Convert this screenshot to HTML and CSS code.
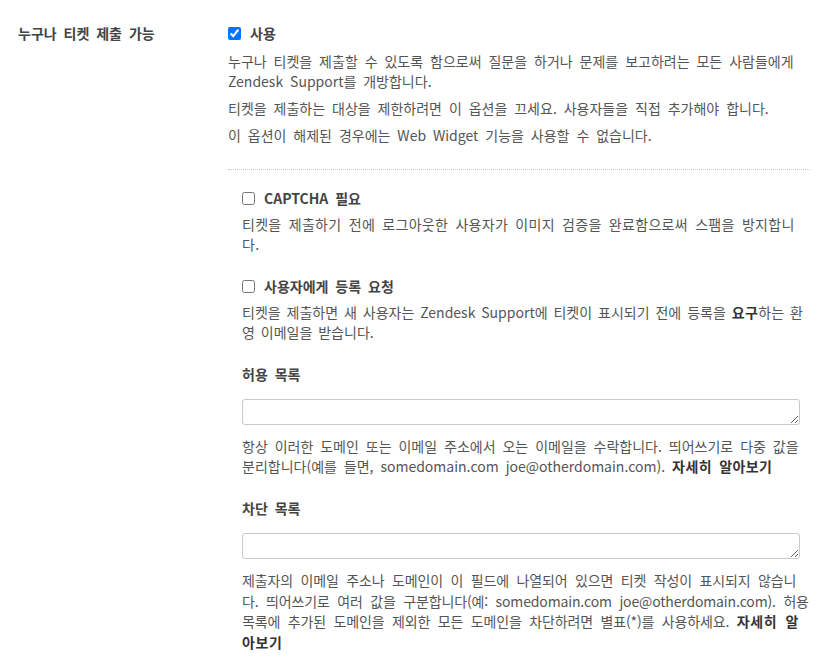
FILE: index.html
```html
<!DOCTYPE html>
<html lang="ko">
<head>
<meta charset="utf-8">
<link rel="stylesheet" href="styles.css">
</head>
<body>
<div class="row">
  <div class="row-label">누구나 티켓 제출 가능</div>
  <div class="row-body">
    <label class="check check-top"><input type="checkbox" class="cb" checked><span>사용</span></label>
    <p class="desc desc-first">누구나 티켓을 제출할 수 있도록 함으로써 질문을 하거나 문제를 보고하려는 모든 사람들에게 Zendesk Support를 개방합니다.</p>
    <p class="desc">티켓을 제출하는 대상을 제한하려면 이 옵션을 끄세요. 사용자들을 직접 추가해야 합니다.</p>
    <p class="desc">이 옵션이 해제된 경우에는 Web Widget 기능을 사용할 수 없습니다.</p>
    <div class="sub">
      <div class="field field-first">
        <label class="check"><input type="checkbox" class="cb"><span>CAPTCHA 필요</span></label>
        <p class="desc desc-tight desc-wide">티켓을 제출하기 전에 로그아웃한 사용자가 이미지 검증을 완료함으로써 스팸을 방지합니다.</p>
      </div>
      <div class="field">
        <label class="check"><input type="checkbox" class="cb"><span>사용자에게 등록 요청</span></label>
        <p class="desc desc-tight desc-snug">티켓을 제출하면 새 사용자는 Zendesk Support에 티켓이 표시되기 전에 등록을 <b>요구</b>하는 환영 이메일을 받습니다.</p>
      </div>
      <div class="field">
        <div class="field-title">허용 목록</div>
        <textarea class="ta"></textarea>
        <p class="desc desc-ta">항상 이러한 도메인 또는 이메일 주소에서 오는 이메일을 수락합니다. 띄어쓰기로 다중 값을 분리합니다(예를 들면, somedomain.com joe@otherdomain.com). <b>자세히 알아보기</b></p>
      </div>
      <div class="field">
        <div class="field-title">차단 목록</div>
        <textarea class="ta"></textarea>
        <p class="desc desc-ta desc-long">제출자의 이메일 주소나 도메인이 이 필드에 나열되어 있으면 티켓 작성이 표시되지 않습니다. 띄어쓰기로 여러 값을 구분합니다(예: somedomain.com joe@otherdomain.com). 허용 목록에 추가된 도메인을 제외한 모든 도메인을 차단하려면 별표(*)를 사용하세요. <b>자세히 알아보기</b></p>
      </div>
    </div>
  </div>
</div>
</body>
</html>
```

FILE: styles.css
```css
html, body {
  margin: 0;
  padding: 0;
  background: #fff;
}
body {
  font-family: "Noto Sans CJK KR", "Noto Sans", sans-serif;
  font-size: 14px;
  line-height: 20px;
  word-spacing: 3px;
  color: #555;
}
.row {
  display: flex;
  padding: 23px 0 0 18px;
}
.row-label {
  width: 210px;
  flex: none;
  font-weight: 700;
  color: #444;
}
.row-body {
  width: 582px;
  flex: none;
}
.check {
  display: flex;
  align-items: center;
  gap: 9px;
  font-weight: 700;
  color: #444;
}
.check-top {
  gap: 9px;
}
.cb {
  width: 13px;
  height: 13px;
  margin: 0;
  flex: none;
  accent-color: #0075ff;
}
.desc {
  margin: 7px 0 0;
}
.desc-first {
  margin-top: 8px;
}
.desc b {
  color: #333;
  letter-spacing: 0.4px;
}
.sub {
  margin-top: 24px;
  border-top: 1px dotted #c8c8c8;
  padding: 0 0 0 14px;
}
.field {
  margin-top: 22px;
}
.field-first {
  margin-top: 18px;
}
.desc-tight {
  margin-top: 6px;
}
.desc-wide {
  letter-spacing: 0.3px;
}
.desc-snug {
  word-spacing: 2px;
}
.field-title {
  font-weight: 700;
  color: #444;
}
.ta {
  display: block;
  box-sizing: border-box;
  width: 558px;
  height: 26px;
  margin: 15px 0 0;
  border: 1px solid #c8c8c8;
  border-radius: 3px;
  resize: vertical;
  font: inherit;
}
.desc-ta {
  margin-top: 11px;
}
.desc-long {
  line-height: 20.7px;
  word-spacing: 3.8px;
  letter-spacing: -0.15px;
}
.desc-long b {
  letter-spacing: 0.6px;
}
```
